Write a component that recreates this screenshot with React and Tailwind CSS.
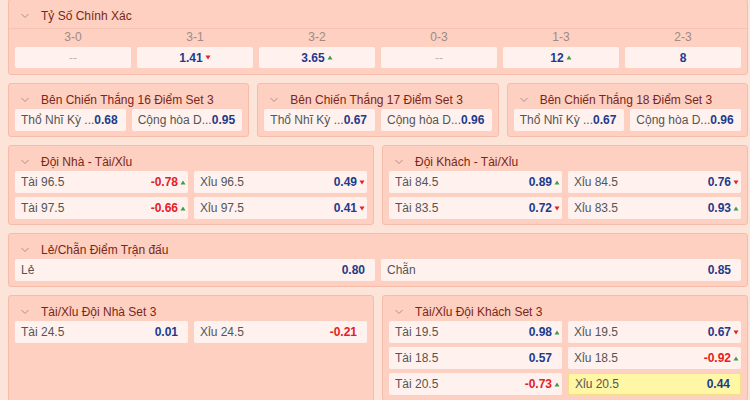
import React from 'react'

const blue = 'text-[#1e3a8c]'
const red = 'text-[#e3211f]'

function Chevron() {
  return (
    <svg width="8" height="6" viewBox="0 0 8 6" className="shrink-0">
      <path d="M0.5 1l3.5 3.5L7.5 1" fill="none" stroke="#b08f86" strokeWidth="1" />
    </svg>
  )
}

function Arrow({ dir }) {
  if (dir === 'up')
    return (
      <svg width="6" height="5" viewBox="0 0 6 5" className="ml-[2px]">
        <path d="M3 0.5L5.5 4.5H0.5z" fill="#3f9b46" />
      </svg>
    )
  if (dir === 'down')
    return (
      <svg width="6" height="5" viewBox="0 0 6 5" className="ml-[2px]">
        <path d="M0.5 0.5H5.5L3 4.5z" fill="#e3211f" />
      </svg>
    )
  return null
}

function Odd({ value, dir, slot = true }) {
  const neg = value.startsWith('-')
  return (
    <span className="flex shrink-0 items-center">
      <span className={'font-bold ' + (neg ? red : blue)}>{value}</span>
      {slot ? (
        <span className="flex w-[8px] justify-start">
          <Arrow dir={dir} />
        </span>
      ) : (
        <Arrow dir={dir} />
      )}
    </span>
  )
}

function Title({ children, className = 'mb-[1px]' }) {
  return (
    <div className={'mt-[8px] flex h-[16px] items-center gap-[12px] pl-[6px] text-[12px] text-[#7a2619] ' + className}>
      <Chevron />
      <span className="whitespace-nowrap">{children}</span>
    </div>
  )
}

function Section({ title, children, className = '' }) {
  return (
    <div className={'rounded-[3px] border border-[#f6bca9] bg-[#fdd0c1] px-[6px] pb-[5px] ' + className}>
      <Title>{title}</Title>
      {children}
    </div>
  )
}

function Cell({ label, value, dir, hl }) {
  return (
    <div
      className={
        'flex h-[22px] items-center justify-between whitespace-nowrap rounded-[2px] pl-[6px] pr-[2px] ' +
        (hl ? 'border border-[#f3e08a] bg-[#fff7a6]' : 'bg-[#fff2ee]')
      }>
      <span className="text-[#555]">{label}</span>
      <Odd value={value} dir={dir} />
    </div>
  )
}

function Grid2({ rows }) {
  return (
    <div className="flex flex-col gap-[4px]">
      {rows.map((r, i) => (
        <div key={i} className="grid grid-cols-2 gap-[6px]">
          <Cell {...r[0]} />
          <Cell {...r[1]} />
        </div>
      ))}
    </div>
  )
}

const scores = [
  { s: '3-0', v: null },
  { s: '3-1', v: '1.41', d: 'down' },
  { s: '3-2', v: '3.65', d: 'up' },
  { s: '0-3', v: null },
  { s: '1-3', v: '12', d: 'up' },
  { s: '2-3', v: '8' },
]

const winners = [
  ['16', '0.68', '0.95'],
  ['17', '0.67', '0.96'],
  ['18', '0.67', '0.96'],
]

export default function App() {
  return (
    <div
      className="flex h-[400px] w-[750px] flex-col gap-[8px] overflow-hidden bg-[#fde4d9] pl-[8px] pr-[2px] text-[12px]"
      style={{ fontFamily: '"Liberation Sans", Arial, sans-serif' }}>
      <div className="-mt-[1px] rounded-[3px] border border-[#f6bca9] bg-[#fdd0c1] px-[6px] pb-[6px]">
        <Title className="mb-[4px]">Tỷ Số Chính Xác</Title>
        <div className="-mx-[6px] grid grid-cols-6 gap-[6px] border-t border-[#f7c3b2] px-[6px]">
          {scores.map((c) => (
            <div key={c.s} className="flex flex-col">
              <div className="flex h-[15px] items-center justify-center text-[#a08a84]">{c.s}</div>
              <div className="mt-[3px] flex h-[21px] items-center justify-center rounded-[2px] bg-[#fff2ee]">
                {c.v ? <Odd value={c.v} dir={c.d} slot={false} /> : <span className="text-[#c4b2ad]">--</span>}
              </div>
            </div>
          ))}
        </div>
      </div>

      <div className="grid grid-cols-3 gap-[8px]">
        {winners.map((w) => (
          <Section key={w[0]} title={'Bên Chiến Thắng ' + w[0] + ' Điểm Set 3'}>
            <div className="grid grid-cols-2 gap-[6px]">
              <Cell label="Thổ Nhĩ Kỳ ..." value={w[1]} />
              <Cell label="Cộng hòa D..." value={w[2]} />
            </div>
          </Section>
        ))}
      </div>

      <div className="grid grid-cols-2 gap-[8px]">
        <Section title="Đội Nhà - Tài/Xỉu">
          <Grid2
            rows={[
              [
                { label: 'Tài 96.5', value: '-0.78', dir: 'up' },
                { label: 'Xỉu 96.5', value: '0.49', dir: 'down' },
              ],
              [
                { label: 'Tài 97.5', value: '-0.66', dir: 'up' },
                { label: 'Xỉu 97.5', value: '0.41', dir: 'down' },
              ],
            ]}
          />
        </Section>
        <Section title="Đội Khách - Tài/Xỉu">
          <Grid2
            rows={[
              [
                { label: 'Tài 84.5', value: '0.89', dir: 'up' },
                { label: 'Xỉu 84.5', value: '0.76', dir: 'down' },
              ],
              [
                { label: 'Tài 83.5', value: '0.72', dir: 'down' },
                { label: 'Xỉu 83.5', value: '0.93', dir: 'up' },
              ],
            ]}
          />
        </Section>
      </div>

      <Section title="Lẻ/Chẵn Điểm Trận đấu">
        <Grid2
          rows={[
            [
              { label: 'Lẻ', value: '0.80' },
              { label: 'Chẵn', value: '0.85' },
            ],
          ]}
        />
      </Section>

      <div className="grid grid-cols-2 items-start gap-[8px]">
        <Section title="Tài/Xỉu Đội Nhà Set 3" className="min-h-[120px]">
          <Grid2
            rows={[
              [
                { label: 'Tài 24.5', value: '0.01' },
                { label: 'Xỉu 24.5', value: '-0.21' },
              ],
            ]}
          />
        </Section>
        <Section title="Tài/Xỉu Đội Khách Set 3">
          <Grid2
            rows={[
              [
                { label: 'Tài 19.5', value: '0.98', dir: 'up' },
                { label: 'Xỉu 19.5', value: '0.67', dir: 'down' },
              ],
              [
                { label: 'Tài 18.5', value: '0.57' },
                { label: 'Xỉu 18.5', value: '-0.92', dir: 'up' },
              ],
              [
                { label: 'Tài 20.5', value: '-0.73', dir: 'up' },
                { label: 'Xỉu 20.5', value: '0.44', hl: true },
              ],
            ]}
          />
        </Section>
      </div>
    </div>
  )
}
